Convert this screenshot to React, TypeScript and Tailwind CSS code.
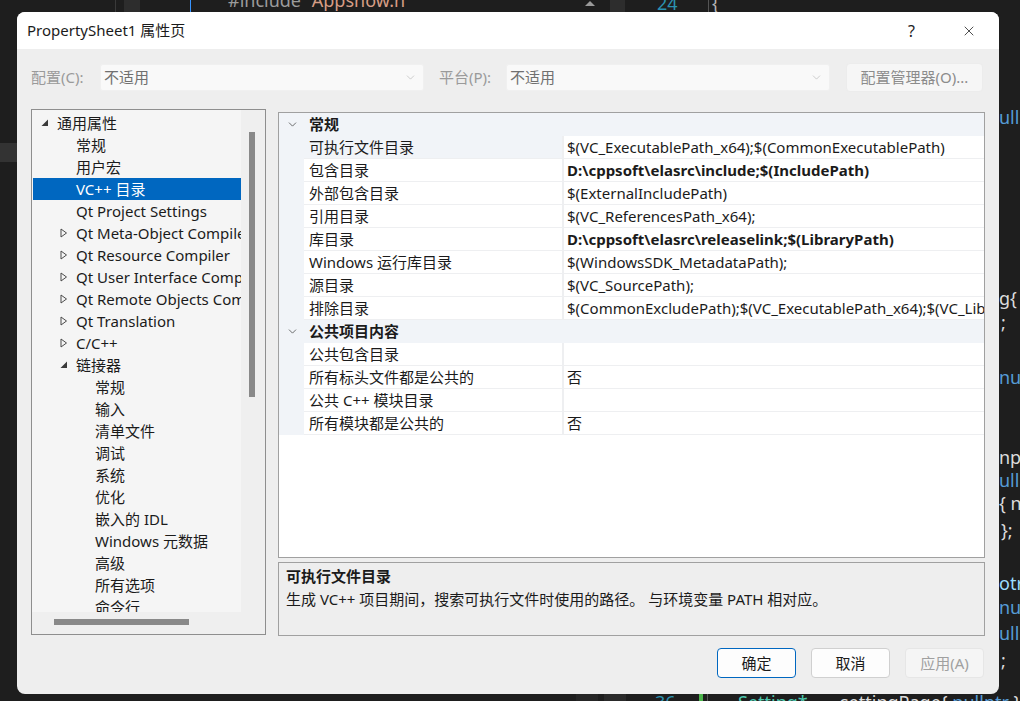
import React from "react";
import { ChevronDown, X } from "lucide-react";

const UI_FONT = "font-['Noto_Sans','Noto_Sans_CJK_SC',sans-serif]";

type TreeItem = { label: string; level: number; arrow?: "open" | "closed"; selected?: boolean };

const treeItems: TreeItem[] = [
    { label: "通用属性", level: 0, arrow: "open" },
    { label: "常规", level: 1 },
    { label: "用户宏", level: 1 },
    { label: "VC++ 目录", level: 1, selected: true },
    { label: "Qt Project Settings", level: 1 },
    { label: "Qt Meta-Object Compiler", level: 1, arrow: "closed" },
    { label: "Qt Resource Compiler", level: 1, arrow: "closed" },
    { label: "Qt User Interface Compiler", level: 1, arrow: "closed" },
    { label: "Qt Remote Objects Compiler", level: 1, arrow: "closed" },
    { label: "Qt Translation", level: 1, arrow: "closed" },
    { label: "C/C++", level: 1, arrow: "closed" },
    { label: "链接器", level: 1, arrow: "open" },
    { label: "常规", level: 2 },
    { label: "输入", level: 2 },
    { label: "清单文件", level: 2 },
    { label: "调试", level: 2 },
    { label: "系统", level: 2 },
    { label: "优化", level: 2 },
    { label: "嵌入的 IDL", level: 2 },
    { label: "Windows 元数据", level: 2 },
    { label: "高级", level: 2 },
    { label: "所有选项", level: 2 },
    { label: "命令行", level: 2 },
];

const levelPad = ["pl-[8px]", "pl-[27px]", "pl-[46px]"];

type PropRow = { name: string; value: string; bold?: boolean; selected?: boolean };
type Section = { title: string; rows: PropRow[] };

const sections: Section[] = [
    {
        title: "常规",
        rows: [
            { name: "可执行文件目录", value: "$(VC_ExecutablePath_x64);$(CommonExecutablePath)", selected: true },
            { name: "包含目录", value: "D:\\cppsoft\\elasrc\\include;$(IncludePath)", bold: true },
            { name: "外部包含目录", value: "$(ExternalIncludePath)" },
            { name: "引用目录", value: "$(VC_ReferencesPath_x64);" },
            { name: "库目录", value: "D:\\cppsoft\\elasrc\\releaselink;$(LibraryPath)", bold: true },
            { name: "Windows 运行库目录", value: "$(WindowsSDK_MetadataPath);" },
            { name: "源目录", value: "$(VC_SourcePath);" },
            { name: "排除目录", value: "$(CommonExcludePath);$(VC_ExecutablePath_x64);$(VC_LibraryPath_x64)" },
        ],
    },
    {
        title: "公共项目内容",
        rows: [
            { name: "公共包含目录", value: "" },
            { name: "所有标头文件都是公共的", value: "否" },
            { name: "公共 C++ 模块目录", value: "" },
            { name: "所有模块都是公共的", value: "否" },
        ],
    },
];

const OpenArrow = () => (
    <svg width="8" height="8" viewBox="0 0 8 8">
        <polygon points="7,0.5 7,7 0.5,7" fill="#3a3a3a" />
    </svg>
);

const ClosedArrow = () => (
    <svg width="8" height="10" viewBox="0 0 8 10">
        <polygon points="1,1 6.5,5 1,9" fill="none" stroke="#4a4a4a" strokeWidth="1" />
    </svg>
);

const ComboBox: React.FC<{ text: string }> = ({ text }) => (
    <div className="flex shrink-0 items-center justify-between w-[324px] h-[27px] bg-[#f9f9f9] border border-[#f0f0f0] rounded-[3px] pl-[3px] pr-[6px] text-[15px] text-[#707070]">
        <span>{text}</span>
        <ChevronDown size={13} strokeWidth={1} color="#a8a8a8" />
    </div>
);

const EditorBackground: React.FC = () => (
    <>
        {/* top code strip */}
        <div className="absolute left-[115px] top-0 w-px h-[12px] bg-[#3a3a3a]" />
        <div className="absolute left-[124px] top-0 w-[16px] h-[12px] bg-[#2d2d2d]" />
        <div className="absolute left-[190px] top-0 w-px h-[12px] bg-[#3794ff]" />
        <div className="absolute left-[228px] top-[-9px] text-[18px] leading-[18px] text-[#9b9b9b] whitespace-nowrap">
            #include <span className="text-[#d69d85]">"Appshow.h"</span>
        </div>
        <div className="absolute left-[585px] top-[1px] w-0 h-0 border-l-[5px] border-r-[5px] border-b-[5px] border-l-transparent border-r-transparent border-b-[#9a9a9a]" />
        <div className="absolute left-[610px] top-0 w-[15px] h-[12px] bg-[#2d2d2d]" />
        <div className="absolute left-[657px] top-[-6px] text-[18px] leading-[18px] text-[#2b91af]">24</div>
        <div className="absolute left-[708px] top-0 w-px h-[12px] bg-[#555]" />
        <div className="absolute left-[712px] top-[-6px] text-[18px] leading-[18px] text-[#b4b4b4]">{"{"}</div>

        {/* left gutter highlight */}
        <div className="absolute left-0 top-[143px] w-[17px] h-[19px] bg-[#333333]" />

        {/* right code fragments */}
        <div className="absolute left-[999px] top-[107px] text-[18px] leading-[20px] text-[#569cd6]">ull</div>
        <div className="absolute left-[999px] top-[288px] text-[18px] leading-[20px] text-[#dcdcdc] whitespace-nowrap">g{"{ n"}</div>
        <div className="absolute left-[1001px] top-[312px] text-[18px] leading-[20px] text-[#dcdcdc]">;</div>
        <div className="absolute left-[999px] top-[367px] text-[18px] leading-[20px] text-[#569cd6]">nul</div>
        <div className="absolute left-[999px] top-[447px] text-[18px] leading-[20px] text-[#dcdcdc]">npe</div>
        <div className="absolute left-[999px] top-[470px] text-[18px] leading-[20px] text-[#569cd6]">ullp</div>
        <div className="absolute left-[999px] top-[493px] text-[18px] leading-[20px] text-[#dcdcdc] whitespace-nowrap">{"{ n"}</div>
        <div className="absolute left-[1001px] top-[520px] text-[18px] leading-[20px] text-[#dcdcdc] whitespace-nowrap">{"};"}</div>
        <div className="absolute left-[999px] top-[573px] text-[18px] leading-[20px] text-[#9cdcfe]">otr</div>
        <div className="absolute left-[999px] top-[597px] text-[18px] leading-[20px] text-[#569cd6]">nu</div>
        <div className="absolute left-[999px] top-[623px] text-[18px] leading-[20px] text-[#569cd6]">ullp</div>
        <div className="absolute left-[1001px] top-[650px] text-[18px] leading-[20px] text-[#dcdcdc]">;</div>

        {/* bottom code line */}
        <div className="absolute left-[576px] top-[694px] w-[22px] h-[7px] bg-[#262626]" />
        <div className="absolute left-[604px] top-[694px] w-[22px] h-[7px] bg-[#2a2a2a]" />
        <div className="absolute left-[655px] top-[692px] text-[18px] leading-[20px] text-[#2b91af]">36</div>
        <div className="absolute left-[699px] top-[694px] w-[4px] h-[7px] bg-[#4bb34b]" />
        <div className="absolute left-[707px] top-[694px] w-px h-[7px] bg-[#555]" />
        <div className="absolute left-[738px] top-[692px] text-[18px] leading-[20px] text-[#4ec9b0] whitespace-nowrap">Setting*</div>
        <div className="absolute left-[840px] top-[692px] text-[18px] leading-[20px] text-[#dcdcdc] whitespace-nowrap">
            settingPage{"{ "}<span className="text-[#569cd6]">nullptr</span>{" };"}
        </div>
    </>
);

const App: React.FC = () => {
    return (
        <div className={`relative w-[1020px] h-[701px] bg-[#1e1e1e] overflow-hidden ${UI_FONT}`}>
            <EditorBackground />

            {/* dialog window */}
            <div className="absolute left-[17px] top-[12px] w-[982px] h-[682px] flex flex-col bg-[#eeeeee] rounded-[8px] overflow-hidden text-[#1b1b1b]">
                {/* title bar */}
                <div className="flex items-center h-[37px] bg-white pl-[10px] pr-[22px]">
                    <span className="text-[15px]">PropertySheet1 属性页</span>
                    <span className="ml-auto text-[16px] text-[#222] mr-[46px]">?</span>
                    <X size={16} strokeWidth={1.2} color="#222" />
                </div>

                {/* body */}
                <div className="flex flex-col px-[14px]">
                    {/* config row */}
                    <div className="flex items-center h-[29px] mt-[14px] text-[15px]">
                        <span className="w-[69px] shrink-0 text-[#9a9a9a]">配置(C):</span>
                        <ComboBox text="不适用" />
                        <span className="ml-[15px] w-[67px] shrink-0 text-[#9a9a9a]">平台(P):</span>
                        <ComboBox text="不适用" />
                        <div className="ml-[16px] w-[137px] shrink-0 h-[29px] flex items-center justify-center bg-[#f6f6f6] border border-[#ececec] rounded-[4px] text-[#8c8c8c]">
                            配置管理器(O)...
                        </div>
                    </div>

                    {/* main */}
                    <div className="flex mt-[17px] gap-[12px]">
                        {/* tree panel */}
                        <div className="flex flex-col shrink-0 w-[235px] h-[526px] border border-[#8e8e8e]">
                            <div className="flex h-[502px]">
                                <div className="w-[209px] shrink-0 overflow-hidden bg-[#f5f5f5] pt-[2px] pl-[1px]">
                                    {treeItems.map((item, i) => (
                                        <div
                                            key={i}
                                            className={`flex items-center h-[22px] whitespace-nowrap text-[15px] ${levelPad[item.level]} ${
                                                item.selected ? "bg-[#0067c0] text-white" : "text-[#1b1b1b]"
                                            }`}
                                        >
                                            <span className="w-[16px] shrink-0 flex items-center">
                                                {item.arrow === "open" && <OpenArrow />}
                                                {item.arrow === "closed" && <ClosedArrow />}
                                            </span>
                                            <span className="shrink-0">{item.label}</span>
                                        </div>
                                    ))}
                                </div>
                                <div className="flex-1 bg-[#efefef]">
                                    <div className="mt-[22px] ml-[8px] w-[6px] h-[265px] bg-[#898989]" />
                                </div>
                            </div>
                            <div className="flex-1 bg-[#efefef]">
                                <div className="mt-[7px] ml-[22px] w-[135px] h-[6px] bg-[#898989]" />
                            </div>
                        </div>

                        {/* property grid + description */}
                        <div className="flex flex-col flex-1 min-w-0 pt-[3px]">
                            <div className="h-[446px] border border-[#a0a0a0] bg-white overflow-hidden">
                                {sections.map((section) => (
                                    <div key={section.title}>
                                        <div className="flex items-center h-[23px] bg-[#f1f4f8]">
                                            <span className="w-[25px] shrink-0 flex justify-center pl-[2px]">
                                                <ChevronDown size={13} strokeWidth={1.4} color="#444" />
                                            </span>
                                            <span className="pl-[5px] text-[15px] font-bold">{section.title}</span>
                                        </div>
                                        {section.rows.map((row) => (
                                            <div key={row.name} className="flex h-[23px] text-[15px]">
                                                <div className="w-[25px] shrink-0 bg-[#f1f4f8]" />
                                                <div
                                                    className={`w-[260px] shrink-0 border-b border-r-2 border-[#eeeff1] pl-[5px] leading-[22px] whitespace-nowrap ${
                                                        row.selected ? "bg-[#f1f4f8]" : "bg-white"
                                                    }`}
                                                >
                                                    {row.name}
                                                </div>
                                                <div
                                                    className={`flex-1 min-w-0 border-b border-[#eeeff1] pl-[3px] leading-[22px] whitespace-nowrap overflow-hidden ${
                                                        row.bold ? "font-bold" : ""
                                                    }`}
                                                >
                                                    {row.value}
                                                </div>
                                            </div>
                                        ))}
                                    </div>
                                ))}
                            </div>

                            <div className="mt-[4px] h-[74px] border border-[#a0a0a0] bg-[#eeeeee] pl-[7px] pt-[3px] text-[15px]">
                                <div className="font-bold leading-[20px]">可执行文件目录</div>
                                <div className="mt-[3px] leading-[20px] whitespace-nowrap">
                                    生成 VC++ 项目期间，搜索可执行文件时使用的路径。 与环境变量 PATH 相对应。
                                </div>
                            </div>
                        </div>
                    </div>

                    {/* buttons */}
                    <div className="flex justify-end gap-[15px] mt-[12px] pr-[1px] text-[15px]">
                        <button className="w-[79px] h-[30px] bg-[#fdfdfd] border border-[#0067c0] rounded-[4px] text-[#1b1b1b]">
                            确定
                        </button>
                        <button className="w-[79px] h-[30px] bg-[#fdfdfd] border border-[#d0d0d0] rounded-[4px] text-[#1b1b1b]">
                            取消
                        </button>
                        <button className="w-[79px] h-[30px] bg-[#f5f5f5] border border-[#e6e6e6] rounded-[4px] text-[#a0a0a0]">
                            应用(A)
                        </button>
                    </div>
                </div>
            </div>
        </div>
    );
};

export default App;
